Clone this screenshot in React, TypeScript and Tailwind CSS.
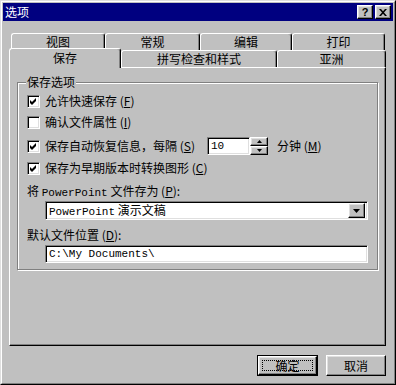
import type { ReactNode } from "react";

const raised =
  "bg-[#c0c0c0] border border-t-white border-l-white border-r-black border-b-black shadow-[inset_-1px_-1px_0_#808080,inset_1px_1px_0_#dfdfdf]";
const sunken =
  "bg-white border border-t-[#808080] border-l-[#808080] border-r-white border-b-white shadow-[inset_1px_1px_0_#000,inset_-1px_-1px_0_#dfdfdf]";

function CheckMark() {
  return (
    <svg width="7" height="7" viewBox="0 0 7 7">
      <path d="M0 2 L2 4 L6 0 L6 3 L2 7 L0 5 Z" fill="#000" />
    </svg>
  );
}

function Check({ checked, children }: { checked?: boolean; children: ReactNode }) {
  return (
    <div className="flex items-center">
      <span className={`box-border flex h-[13px] w-[13px] items-center justify-center ${sunken}`}>
        {checked && <CheckMark />}
      </span>
      <span className="ml-[5px] whitespace-nowrap leading-[14px]">{children}</span>
    </div>
  );
}

function Tab({ label, width, selected }: { label: string; width: number; selected?: boolean }) {
  return (
    <div
      style={{ width }}
      className={`box-border flex items-center justify-center rounded-t-[3px] border-l border-t border-r border-l-white border-t-white border-r-black bg-[#c0c0c0] shadow-[inset_-1px_0_0_#808080] ${
        selected ? "relative z-10 mb-[-1px] h-[20px] pb-[2px]" : "h-[17px]"
      }`}
    >
      {label}
    </div>
  );
}

export default function App() {
  return (
    <div className="box-border h-[385px] w-[396px] border border-b-black border-l-[#dfdfdf] border-r-black border-t-[#dfdfdf] bg-[#c0c0c0] font-['Noto_Sans_CJK_SC','Noto_Sans',sans-serif] text-[12px] text-black">
      <div className="box-border h-full border border-b-[#808080] border-l-white border-r-[#808080] border-t-white p-[1px]">
        {/* title bar */}
        <div className="flex h-[18px] items-center bg-[#000080] pl-[2px] pr-[2px] text-white">
          <span className="leading-[14px]">选项</span>
          <div className="ml-auto flex gap-[2px]">
            <button className={`box-border flex h-[14px] w-[16px] items-center justify-center font-['Liberation_Sans',sans-serif] text-[11px] font-bold leading-none text-black ${raised}`}>
              ?
            </button>
            <button className={`box-border flex h-[14px] w-[16px] items-center justify-center ${raised}`}>
              <svg width="8" height="7" viewBox="0 0 8 7">
                <path d="M0 0h2l2 2.3L6 0h2L5 3.5 8 7H6L4 4.7 2 7H0l3-3.5z" fill="#000" />
              </svg>
            </button>
          </div>
        </div>

        {/* tabs */}
        <div className="ml-[6px] mt-[12px] w-[377px]">
          <div className="ml-[2px] flex">
            <Tab label="视图" width={94} />
            <Tab label="常规" width={95} />
            <Tab label="编辑" width={92} />
            <Tab label="打印" width={93} />
          </div>
          <div className="flex h-[17px] items-end">
            <Tab label="保存" width={112} selected />
            <Tab label="拼写检查和样式" width={156} />
            <Tab label="亚洲" width={109} />
          </div>

          {/* panel */}
          <div className="box-border h-[279px] border border-b-black border-l-white border-r-black border-t-white pt-[14px] shadow-[inset_-1px_-1px_0_#808080]">
            <div className="ml-[7px] box-border w-[361px] border border-[#808080] pb-[6px] pl-[9px] shadow-[1px_1px_0_#fff,inset_1px_1px_0_#fff]">
              <div className="-ml-[1px] -mt-[8px] h-[14px] w-fit bg-[#c0c0c0] px-[1px] leading-[14px]">保存选项</div>

              <div className="mt-[5px]">
                <Check checked>
                  允许快速保存 (<u>F</u>)
                </Check>
              </div>
              <div className="mt-[7px]">
                <Check>
                  确认文件属性 (<u>I</u>)
                </Check>
              </div>
              <div className="mt-[8px] flex h-[18px] items-center">
                <div className="w-[180px]">
                  <Check checked>
                    保存自动恢复信息，每隔 (<u>S</u>)
                  </Check>
                </div>
                <div className={`box-border flex h-[18px] w-[43px] items-center pl-[3px] font-['Liberation_Mono',monospace] text-[11px] ${sunken}`}>
                  10
                </div>
                <div className="flex h-[18px] w-[18px] flex-col">
                  <div className={`box-border flex h-[9px] items-center justify-center ${raised}`}>
                    <svg width="5" height="3" viewBox="0 0 5 3">
                      <path d="M2.5 0 L5 3 L0 3 Z" fill="#000" />
                    </svg>
                  </div>
                  <div className={`box-border flex h-[9px] items-center justify-center ${raised}`}>
                    <svg width="5" height="3" viewBox="0 0 5 3">
                      <path d="M0 0 L5 0 L2.5 3 Z" fill="#000" />
                    </svg>
                  </div>
                </div>
                <span className="ml-[9px] leading-[14px]">
                  分钟 (<u>M</u>)
                </span>
              </div>
              <div className="mt-[6px]">
                <Check checked>
                  保存为早期版本时转换图形 (<u>C</u>)
                </Check>
              </div>

              <div className="mt-[9px] h-[14px] leading-[14px]">
                将 <span className="font-['Liberation_Mono',monospace] text-[11px]">PowerPoint</span> 文件存为 (<u>P</u>):
              </div>
              <div className={`ml-[18px] mt-[3px] box-border flex h-[19px] w-[323px] items-center pl-[3px] pr-[2px] ${sunken}`}>
                <span className="leading-[14px]">
                  <span className="font-['Liberation_Mono',monospace] text-[11px]">PowerPoint</span> 演示文稿
                </span>
                <div className={`ml-auto box-border flex h-[15px] w-[17px] items-center justify-center ${raised}`}>
                  <svg width="7" height="4" viewBox="0 0 7 4">
                    <path d="M0 0 L7 0 L3.5 4 Z" fill="#000" />
                  </svg>
                </div>
              </div>

              <div className="mt-[8px] h-[14px] leading-[14px]">
                默认文件位置 (<u>D</u>):
              </div>
              <div className={`ml-[18px] mt-[3px] box-border flex h-[18px] w-[323px] items-center pl-[3px] font-['Liberation_Mono',monospace] text-[11px] ${sunken}`}>
                C:\My Documents\
              </div>
            </div>
          </div>

          {/* buttons */}
          <div className="mt-[9px] flex justify-end gap-[8px]">
            <div className="box-border h-[21px] w-[61px] border border-black">
              <button className={`box-border flex h-full w-full items-center justify-center p-[3px] ${raised}`}>
                <span className="flex h-full w-full items-center justify-center border border-dotted border-black leading-[12px]">
                  确定
                </span>
              </button>
            </div>
            <button className={`box-border flex h-[21px] w-[60px] items-center justify-center leading-[14px] ${raised}`}>
              取消
            </button>
          </div>
        </div>
      </div>
    </div>
  );
}
